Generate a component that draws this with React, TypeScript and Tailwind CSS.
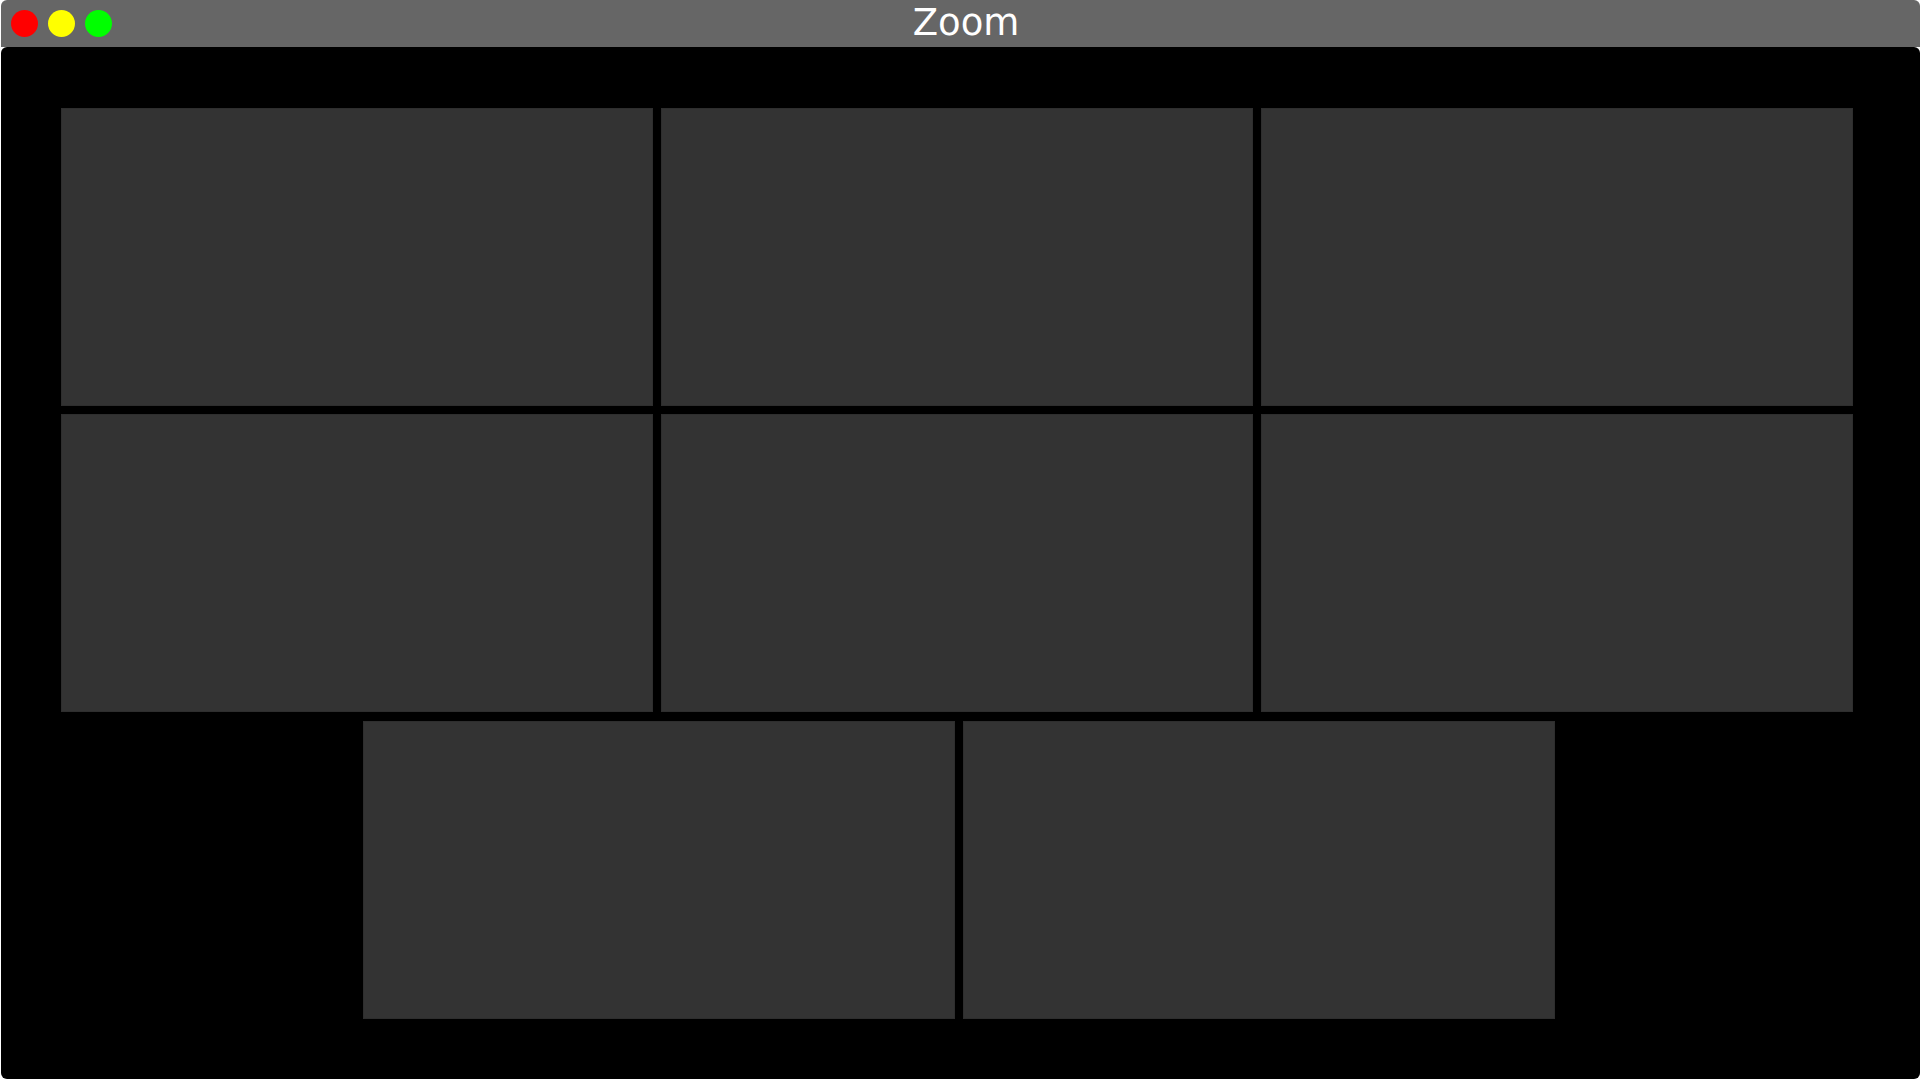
const tiles = [1, 2, 3, 4, 5, 6];
const lastRow = [7, 8];

function Tile() {
  return <div className="w-[592px] h-[298px] bg-[#333333] border border-[#2e2e2e]" />;
}

export default function App() {
  return (
    <div className="w-[1921px] h-[1081px] bg-white overflow-hidden" style={{ fontFamily: '"DejaVu Sans", sans-serif' }}>
      <div className="ml-[1px] w-[1919px] flex flex-col">
        {/* Title bar */}
        <div className="h-[47px] bg-[#666666] rounded-t-[6px] grid grid-cols-[1fr_auto_1fr] items-center">
          <div className="flex items-center gap-[10px] pl-[10px] pb-[1px]">
            <span className="w-[27px] h-[27px] rounded-full bg-[#ff0000]" />
            <span className="w-[27px] h-[27px] rounded-full bg-[#ffff00]" />
            <span className="w-[27px] h-[27px] rounded-full bg-[#00ff00]" />
          </div>
          <div className="text-white text-[37px] leading-none pb-[2px] pl-[11px]">Zoom</div>
          <div />
        </div>

        {/* Video grid */}
        <div className="h-[1032px] bg-black rounded-[6px] flex flex-col items-center pt-[61px] pr-[7px] gap-[8px]">
          <div className="grid grid-cols-3 gap-[8px]">
            {tiles.map((t) => (
              <Tile key={t} />
            ))}
          </div>
          <div className="flex gap-[8px] mt-[1px] ml-[4px]">
            {lastRow.map((t) => (
              <Tile key={t} />
            ))}
          </div>
        </div>
      </div>
    </div>
  );
}
